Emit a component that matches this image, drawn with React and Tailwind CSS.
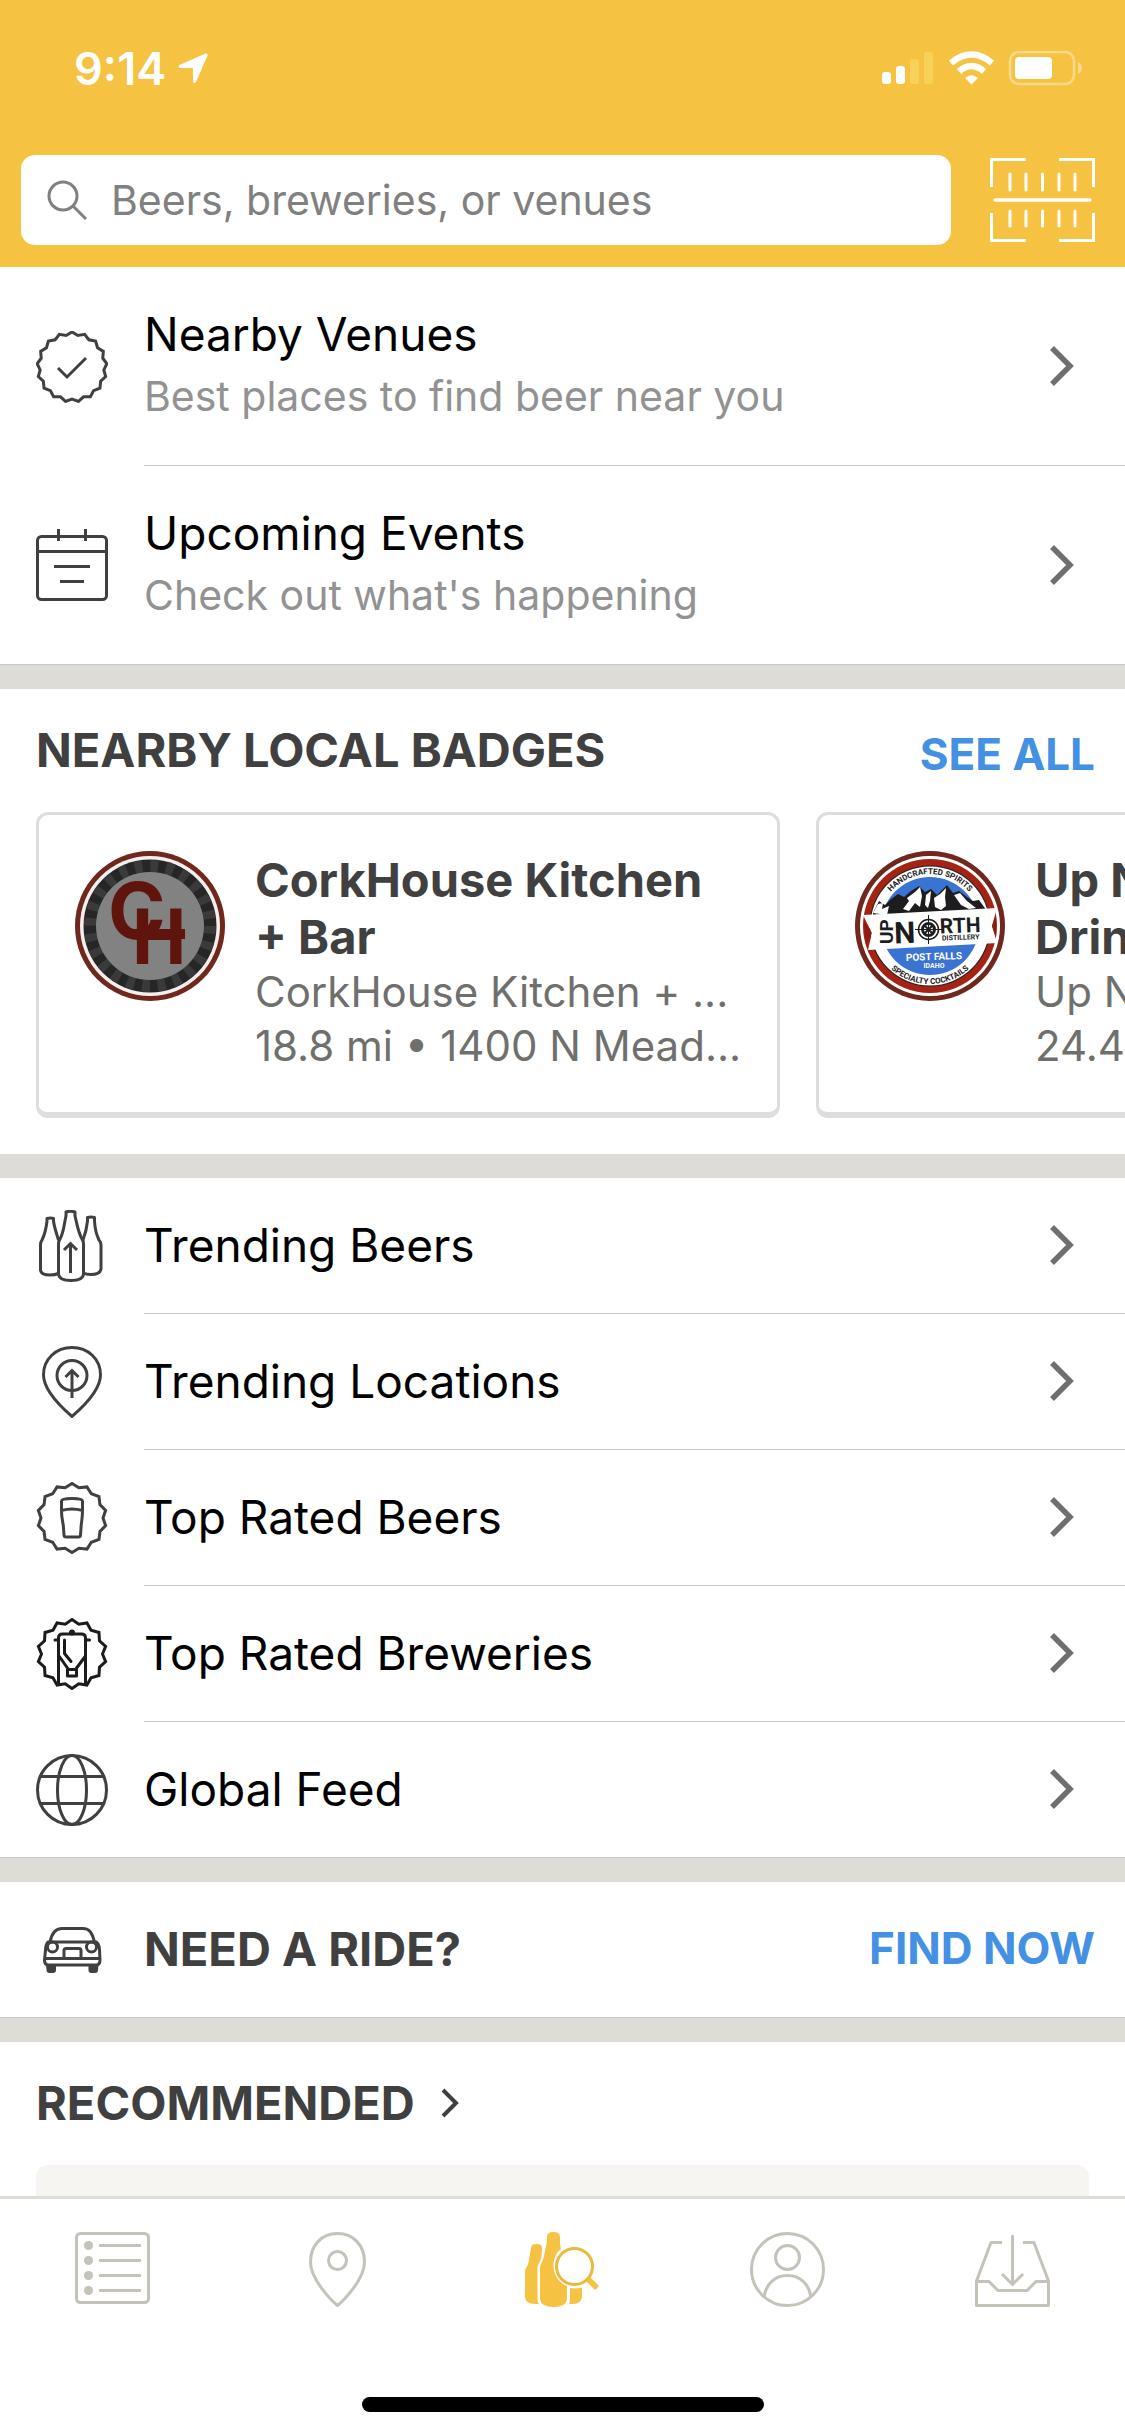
import React from "react";

const sealPoints = (count, outer, inner) =>
  Array.from({ length: count * 2 }, (_, i) => {
    const angle = (Math.PI * i) / count;
    const r = i % 2 ? inner : outer;
    return `${(36 + r * Math.sin(angle)).toFixed(2)},${(36 - r * Math.cos(angle)).toFixed(2)}`;
  }).join(" ");

function LineIcon({ children, color = "#404040" }) {
  return (
    <svg
      viewBox="0 0 72 72"
      className="size-[72px] shrink-0"
      fill="none"
      stroke={color}
      strokeWidth="3"
      aria-hidden="true"
    >
      {children}
    </svg>
  );
}

const VenueIcon = () => (
  <LineIcon>
    <polygon points={sealPoints(17, 35, 32)} />
    <path d="M22 37 L31 46 L50 27" />
  </LineIcon>
);

const CalendarIcon = () => (
  <LineIcon>
    <rect x="1.5" y="7.5" width="69" height="63" rx="4" />
    <path d="M1.5 22.5 H70.5 M22.5 0 V12 M49.5 0 V12 M18 37.5 H54 M24 52.5 H48" />
  </LineIcon>
);

const BottlesIcon = () => (
  <LineIcon>
    <path
      strokeLinejoin="round"
      d="M30 2 Q34.500 0.500 39 2 L39 6 C41 14 42 22 46 29 Q47.500 31 47.500 34 V64 Q47 70.500 35 70.500 Q23 70.500 22.500 64 V34 Q22.500 31 24 29 C28 22 28 14 30 6 Z"
    />
    <path
      strokeLinejoin="round"
      d="M22.500 30 C20 22 18 16 17.500 11 V8.500 Q14.500 7.500 11 8.500 V11 C10 20 8 26 6 30 Q4.500 32 4.500 35 V60 Q5 65 14 65 Q19 65 22.500 63.500"
    />
    <path
      strokeLinejoin="round"
      d="M47 30 C50 22 51 16 51.500 11 V7.500 Q55 6.500 58.500 7.500 V11 C59 20 61 26 63 30 Q65 32 65 35 V59 Q64 64.500 55 64.500 Q50 64.500 47.500 63"
    />
    <path d="M34.500 63 V35 M28 40 L34.500 33.500 L41 40" />
  </LineIcon>
);

const TrendingPinIcon = () => (
  <LineIcon>
    <path
      strokeLinejoin="round"
      d="M36 70.500 C32 67 7.500 46 7.500 29 C7.500 13 20 1.500 36 1.500 S64.500 13 64.500 29 C64.500 46 40 67 36 70.500 Z"
    />
    <circle cx="36" cy="29.500" r="15" />
    <path d="M36 52 V25 M29.500 31 L36 24.500 L42.500 31" />
  </LineIcon>
);

const GlassIcon = () => (
  <LineIcon>
    <polygon points={sealPoints(14, 34.5, 31)} />
    <path
      strokeLinejoin="round"
      d="M25.500 19 Q25.500 16.500 36 16.500 Q46.500 16.500 46.500 19 V29 C46.500 37 45 42 45 46 L44.500 53 Q44.500 55 42 55 H30.500 Q28 55 28 53 L27.500 46 C27.500 42 25.500 37 25.500 29 Z M25.500 28.500 Q36 25.500 46.500 28.500"
    />
  </LineIcon>
);

const BreweryIcon = () => (
  <LineIcon color="#1c1c1c">
    <polygon points={sealPoints(14, 34.5, 30.5)} />
    <path d="M22.500 67 V20 Q22.500 16 26.500 16 H45.500 Q49.500 16 49.500 20 V67" />
    <path d="M19 22 H22 M50 22 H53.500" strokeLinecap="round" />
    <path
      d="M23 38 L32.500 51.500 H39.500 L49.500 38 M31.500 51.500 V58 H40.500 V51.500 M28.500 22 V35.500 L35 43.500"
      strokeLinecap="round"
      strokeLinejoin="round"
    />
    <circle cx="36" cy="14.500" r="1.500" />
  </LineIcon>
);

const GlobeIcon = () => (
  <LineIcon>
    <circle cx="36" cy="36" r="34.500" />
    <ellipse cx="36" cy="36" rx="14.500" ry="34.500" />
    <path d="M5 22.500 H67 M5 49.500 H67" />
  </LineIcon>
);

const CarIcon = () => (
  <LineIcon>
    <path d="M14 28 C16 18 20 14.500 26 14.500 H47 C53 14.500 56 18 58.500 28" />
    <path
      strokeLinejoin="round"
      d="M12 28 H60.500 Q63.500 31 63.500 36 L64 46 Q64 51 60 51 H12.500 Q8.500 51 8.500 46 L9.500 36 Q9.500 31 12 28 Z M9 44.500 H64"
    />
    <circle cx="16.500" cy="33" r="5" />
    <circle cx="55.500" cy="33" r="5" />
    <path d="M28 44 V36.500 Q28 34.500 30 34.500 H43 Q45 34.500 45 36.500 V44" />
    <path
      stroke="none"
      fill="#404040"
      d="M10 51 H20 V56 Q20 59 17 59 H13.500 Q10.500 59 10.500 56 Z M52.500 51 H62.500 L62 56 Q62 59 59 59 H55.500 Q52.500 59 52.500 56 Z"
    />
  </LineIcon>
);

function Chevron() {
  return (
    <svg viewBox="0 0 26 42" className="h-[42px] w-[26px] shrink-0" fill="none" aria-hidden="true">
      <path d="M3 3 L21 21 L3 39" stroke="#6f706e" strokeWidth="5.500" />
    </svg>
  );
}

function TallRow({ icon, title, subtitle, last }) {
  return (
    <a href="#" className="flex items-stretch pl-9">
      <span className="flex items-center">{icon}</span>
      <span
        className={
          last
            ? "ml-9 flex h-[198px] flex-1 items-center pr-[50px]"
            : "ml-9 flex h-[199px] flex-1 items-center border-b border-[#c8c7cc] pr-[50px]"
        }
      >
        <span className="flex flex-1 flex-col pb-0.5">
          <span className="text-[46px] leading-[62px] text-black">{title}</span>
          <span className="text-[41px] leading-[62px] text-[#929292]">{subtitle}</span>
        </span>
        <Chevron />
      </span>
    </a>
  );
}

function Row({ icon, title, last }) {
  return (
    <a href="#" className="flex items-stretch pl-9">
      <span className="flex items-center">{icon}</span>
      <span
        className={
          last
            ? "ml-9 flex h-[135px] flex-1 items-center pr-[50px] pb-0.5"
            : "ml-9 flex h-[136px] flex-1 items-center border-b border-[#c8c7cc] pr-[50px] pb-0.5"
        }
      >
        <span className="flex-1 text-[46px] leading-[62px] text-black">{title}</span>
        <Chevron />
      </span>
    </a>
  );
}

const Divider = ({ line }) => (
  <div
    className={
      line ? "h-[25px] shrink-0 border-t border-[#c8c7cc] bg-[#dddcd6]" : "h-6 shrink-0 bg-[#dddcd6]"
    }
  />
);

function CorkHouseLogo() {
  return (
    <svg viewBox="0 0 150 150" className="size-[150px] shrink-0" role="img" aria-label="CorkHouse Kitchen + Bar">
      <circle cx="75" cy="75" r="75" fill="#6f271e" />
      <circle cx="75" cy="75" r="70" fill="#f4efec" />
      <circle cx="75" cy="75" r="66.500" fill="#262626" />
      <circle
        cx="75"
        cy="75"
        r="60"
        fill="none"
        stroke="#3a3a3a"
        strokeWidth="12"
        strokeDasharray="7.850 7.850"
      />
      <circle cx="75" cy="75" r="54" fill="#828282" />
      <g fill="#5f150e" fontWeight="700">
        <text x="33" y="88" fontSize="78" fontFamily="Inter, sans-serif">C</text>
        <text x="57" y="113" fontSize="77" fontFamily="Roboto, sans-serif">H</text>
        <rect x="56" y="78" width="54" height="10" />
      </g>
    </svg>
  );
}

function UpNorthLogo() {
  return (
    <svg viewBox="0 0 150 150" className="size-[150px] shrink-0" role="img" aria-label="Up North Distillery">
      <defs>
        <path id="arcTop" d="M23 75 A52 52 0 0 1 127 75" />
        <path id="arcBottom" d="M17 75 A58 58 0 0 0 133 75" />
      </defs>
      <circle cx="75" cy="75" r="75" fill="#6f271e" />
      <circle cx="75" cy="75" r="70" fill="#fff" />
      <circle cx="75" cy="75" r="67" fill="#a52314" />
      <circle cx="75" cy="75" r="60.500" fill="#222" />
      <circle cx="75" cy="75" r="59.500" fill="#fff" />
      <circle cx="75" cy="75" r="49" fill="#3a74d2" />
      <path
        d="M18 62 L24 50 L30 54 L36 48 L43 43 L49 46 L56 40 L64 35 L70 41 L76 38 L82 44 L92 34 L98 42 L104 40 L112 46 L118 50 L124 49 L132 60 L132 64 L18 66 Z"
        fill="#1d1d1f"
      />
      <path
        d="M18 62 L23 53 L28 52 L27 58 L34 55 L32 64 Z M48 58 L54 50 L52 47 L60 41 L65 36 L67 45 L65 56 L60 52 L54 60 Z M70 54 L71 44 L76 40 L75 50 L73 57 Z M80 56 L79 47 L85 43 L91 37 L90 46 L91 55 L86 59 Z M99 44 L105 42 L112 50 L121 57 L114 58 L106 54 Z"
        fill="#fff"
      />
      <path d="M8 64 L142 57 L137 75 L142 92 L13 99 L17 82 Z" fill="#fff" />
      <path d="M9 70 L17 82 L11 94 Z M141 63 L137 75 L141 86 Z" fill="#8d1d12" />
      <g fill="#1d1d1f" fontFamily="Roboto, sans-serif" fontWeight="700">
        <text x="-93" y="38" fontSize="19" transform="rotate(-90)">UP</text>
        <text x="39" y="92" fontSize="30" transform="rotate(-2 50 80)">N</text>
        <text x="85" y="82" fontSize="21" transform="rotate(-2 100 80)">RTH</text>
        <text x="87" y="89" fontSize="7" transform="rotate(-2 100 88)">DISTILLERY</text>
      </g>
      <g fill="none" stroke="#1d1d1f">
        <circle cx="73.500" cy="78.500" r="10" strokeWidth="1.500" />
        <circle cx="73.500" cy="78.500" r="6" strokeWidth="3" />
        <path d="M73.500 64 V93 M60 78.500 H87" strokeWidth="1" />
        <path d="M69.500 74.500 L77.500 82.500 M77.500 74.500 L69.500 82.500" strokeWidth="2" />
      </g>
      <g fill="#fff" fontFamily="Roboto, sans-serif" fontWeight="700" textAnchor="middle">
        <text x="79" y="109" fontSize="10" transform="rotate(-2 79 106)">POST FALLS</text>
        <text x="79" y="117" fontSize="7">IDAHO</text>
      </g>
      <g fill="#222" fontFamily="Roboto, sans-serif" fontWeight="700" fontSize="8" textAnchor="middle">
        <text>
          <textPath href="#arcTop" startOffset="50%">HANDCRAFTED SPIRITS</textPath>
        </text>
        <text>
          <textPath href="#arcBottom" startOffset="50%">SPECIALTY COCKTAILS</textPath>
        </text>
      </g>
    </svg>
  );
}

function BadgeCard({ logo, title, venue, place }) {
  return (
    <a
      href="#"
      className="flex h-[306px] w-[744px] shrink-0 rounded-xl border-[3px] border-b-[6px] border-[#dddddb] bg-white pt-9 pl-9"
    >
      {logo}
      <span className="ml-[30px] flex flex-col whitespace-nowrap text-[#6f706e]">
        <span className="text-[47px] leading-[57px] font-bold text-[#404040]">
          {title[0]}
          <br />
          {title[1]}
        </span>
        <span className="text-[42px] leading-[54px]">{venue}</span>
        <span className="text-[42px] leading-[54px]">{place}</span>
      </span>
    </a>
  );
}

function StatusBar() {
  return (
    <div className="flex h-[137px] items-center justify-between pr-[43px] pl-[74px] text-white">
      <div className="flex items-center gap-3">
        <span className="text-[45px] leading-[60px] font-semibold">9:14</span>
        <svg viewBox="0 0 30 31" className="h-[31px] w-[30px]" fill="#fff" aria-hidden="true">
          <path d="M27.500 0.500 Q30 0 29.500 2.500 L18 29 Q16 31.500 15 28.500 V16 Q15 15 14 15 H2 Q-1 14 1.500 12 Z" />
        </svg>
      </div>
      <svg viewBox="0 0 200 35" className="h-[35px] w-[200px]" aria-hidden="true">
        <g fill="#fff">
          <rect x="0" y="21" width="9" height="12" rx="3" />
          <rect x="14" y="15" width="9" height="18" rx="3" />
          <path d="M196 11 Q200 13 200 17 T196 23 Z" opacity="0.400" />
          <rect x="133" y="6" width="37" height="22" rx="4" />
        </g>
        <g fill="#f8d158">
          <rect x="28" y="8" width="9" height="25" rx="3" />
          <rect x="42" y="1" width="9" height="32" rx="3" />
        </g>
        <g fill="none" stroke="#fff" strokeWidth="6.500">
          <path d="M69 12 Q79 3.500 89.500 3.500 T110 12" />
          <path d="M77 20.500 Q83 15 89.500 15 T102 20.500" />
        </g>
        <path d="M83 27 Q89.500 21.500 96 27 L89.500 33.500 Z" fill="#fff" />
        <rect x="128" y="1" width="64" height="32" rx="9" fill="none" stroke="#fff" strokeWidth="2.500" opacity="0.400" />
      </svg>
    </div>
  );
}

function ScanIcon() {
  return (
    <svg viewBox="0 0 105 84" className="h-[84px] w-[105px]" fill="none" stroke="#fff" strokeWidth="3" aria-hidden="true">
      <path d="M1.500 29 V1.500 H36 M69 1.500 H103.500 V29 M1.500 55 V82.500 H36 M69 82.500 H103.500 V55" />
      <path d="M5 42 H100" strokeWidth="3.500" strokeLinecap="round" />
      <path
        strokeLinecap="round"
        d="M20 16 V32 M36 16 V32 M52.500 16 V32 M69 16 V32 M85 16 V32 M20 53 V68 M36 53 V68 M52.500 53 V68 M69 53 V68 M85 53 V68"
      />
    </svg>
  );
}

function TabIcon({ children }) {
  return (
    <svg viewBox="0 0 75 75" className="size-[75px]" fill="none" stroke="#c5c2ba" strokeWidth="3" aria-hidden="true">
      {children}
    </svg>
  );
}

const tabs = [
  {
    label: "Activity",
    icon: (
      <TabIcon>
        <rect x="1.500" y="1.500" width="72" height="69" rx="4" />
        <path d="M24 13.500 H66 M24 28.500 H66 M24 43.500 H66 M24 58.500 H66" />
        <g fill="#c5c2ba" stroke="none">
          <circle cx="13.500" cy="13.500" r="4.500" />
          <circle cx="13.500" cy="28.500" r="4.500" />
          <circle cx="13.500" cy="43.500" r="4.500" />
          <circle cx="13.500" cy="58.500" r="4.500" />
        </g>
      </TabIcon>
    ),
  },
  {
    label: "Nearby",
    icon: (
      <TabIcon>
        <path
          strokeLinejoin="round"
          d="M37.500 73.500 C33 70 10.500 48 10.500 30 C10.500 13 22 1.500 37.500 1.500 S64.500 13 64.500 30 C64.500 48 42 70 37.500 73.500 Z"
        />
        <circle cx="37.500" cy="28.500" r="9" />
      </TabIcon>
    ),
  },
  {
    label: "Discover",
    icon: (
      <TabIcon>
        <g fill="#f5c242" stroke="none">
          <path d="M6 16 Q6 12 11.500 12 Q17 12 17 16 C17 22 16 28 14 31 Q12.500 33 12.500 37 V67 Q12.500 70 14 72 H11 Q0 72 0 65 V40 Q0 38 1 36 Q3 34 4 28 Z" />
          <path d="M22 5 Q22 0 28.500 0 Q35 0 35 5 V12 L36 17 C26 24 24 46 42 54 V67 Q41 75 28.500 75 Q16 75 15 67 V36 Q15 33 17 30 Q19 26 20 19 Q22 12 22 5 Z" />
          <path d="M45 56 Q51 57 57 55.500 V65 Q56 72 48 72 H44 Q45 70 45 67 Z" />
          <path d="M61 49 L65 45 L74 54 L70 58 Z" />
        </g>
        <circle cx="49.500" cy="34.500" r="18" stroke="#e9b93c" />
      </TabIcon>
    ),
    current: true,
  },
  {
    label: "Profile",
    icon: (
      <TabIcon>
        <circle cx="37.500" cy="37.500" r="36" />
        <circle cx="37.500" cy="25.500" r="12" />
        <path d="M14 65 C16 52 25 43.500 37.500 43.500 S59 52 61 65" />
      </TabIcon>
    ),
  },
  {
    label: "Inbox",
    icon: (
      <TabIcon>
        <path d="M27 10.500 H16 L1.500 49 V73.500 H73.500 V49 L59 10.500 H48" strokeLinejoin="round" />
        <path d="M1.500 49.500 H14 L23 58.500 H52 L61 49.500 H73.500" />
        <path d="M37.500 3 V52 M27 42 L37.500 52.500 L48 42" />
      </TabIcon>
    ),
  },
];

export default function App() {
  return (
    <div className="flex h-screen flex-col overflow-hidden bg-white font-['Inter','Liberation_Sans',sans-serif]">
      <header className="shrink-0 bg-[#f5c242]">
        <StatusBar />
        <div className="flex items-center gap-[39px] pt-[18px] pr-[30px] pb-[22px] pl-[21px]">
          <label className="flex h-[90px] flex-1 items-center rounded-[14px] bg-white pl-[26px]">
            <svg viewBox="0 0 40 40" className="size-10 shrink-0" fill="none" stroke="#808080" strokeWidth="3" aria-hidden="true">
              <circle cx="16" cy="16" r="14" />
              <path d="M26 26 L39 39" />
            </svg>
            <input
              type="search"
              aria-label="Search"
              placeholder="Beers, breweries, or venues"
              className="ml-6 min-w-0 flex-1 bg-transparent text-[41px] leading-[54px] outline-none placeholder:text-[#808080]"
            />
          </label>
          <button type="button" aria-label="Scan barcode">
            <ScanIcon />
          </button>
        </div>
      </header>

      <main className="flex min-h-0 flex-1 flex-col overflow-hidden">
        <nav className="shrink-0">
          <TallRow icon={<VenueIcon />} title="Nearby Venues" subtitle="Best places to find beer near you" />
          <TallRow icon={<CalendarIcon />} title="Upcoming Events" subtitle="Check out what's happening" last />
        </nav>
        <Divider line />

        <section className="shrink-0 pb-9">
          <div className="flex h-[123px] items-center justify-between pr-[30px] pb-0.5 pl-9">
            <h2 className="text-[47px] leading-[62px] font-bold text-[#404040]">NEARBY LOCAL BADGES</h2>
            <a href="#" className="pt-2 text-[44px] leading-[54px] font-bold text-[#4490e2]">
              SEE ALL
            </a>
          </div>
          <div className="flex gap-9 overflow-hidden pl-9">
            <BadgeCard
              logo={<CorkHouseLogo />}
              title={["CorkHouse Kitchen", "+ Bar"]}
              venue="CorkHouse Kitchen + ..."
              place="18.8 mi • 1400 N Mead..."
            />
            <BadgeCard logo={<UpNorthLogo />} title={["Up North", "Drinks"]} venue="Up North" place="24.4 mi" />
          </div>
        </section>
        <Divider />

        <nav className="shrink-0">
          <Row icon={<BottlesIcon />} title="Trending Beers" />
          <Row icon={<TrendingPinIcon />} title="Trending Locations" />
          <Row icon={<GlassIcon />} title="Top Rated Beers" />
          <Row icon={<BreweryIcon />} title="Top Rated Breweries" />
          <Row icon={<GlobeIcon />} title="Global Feed" last />
        </nav>
        <Divider line />

        <section className="flex h-[135px] shrink-0 items-center pr-[30px] pl-9">
          <CarIcon />
          <h2 className="ml-9 flex-1 pb-0.5 text-[47px] leading-[62px] font-bold text-[#404040]">NEED A RIDE?</h2>
          <a href="#" className="pb-1 text-[44px] leading-[54px] font-bold text-[#4490e2]">
            FIND NOW
          </a>
        </section>
        <Divider line />

        <section className="flex flex-1 flex-col px-9">
          <a href="#" className="flex h-[123px] shrink-0 items-center gap-[26px] pb-0.5">
            <h2 className="text-[47px] leading-[62px] font-bold text-[#404040]">RECOMMENDED</h2>
            <svg viewBox="0 0 18 30" className="h-[30px] w-[18px]" fill="none" aria-hidden="true">
              <path d="M2 2 L15 15 L2 28" stroke="#404040" strokeWidth="4" />
            </svg>
          </a>
          <div className="flex-1 rounded-t-xl bg-[#f6f5f1]" />
        </section>
      </main>

      <footer className="shrink-0 border-t-[3px] border-[#dddcd6] bg-white pb-6">
        <nav className="grid h-[198px] grid-cols-5 items-start justify-items-center pt-[33px]">
          {tabs.map((tab) => (
            <button key={tab.label} type="button" aria-label={tab.label} aria-current={tab.current ? "page" : undefined}>
              {tab.icon}
            </button>
          ))}
        </nav>
        <div className="mx-auto h-[15px] w-[402px] rounded-full bg-black" />
      </footer>
    </div>
  );
}
